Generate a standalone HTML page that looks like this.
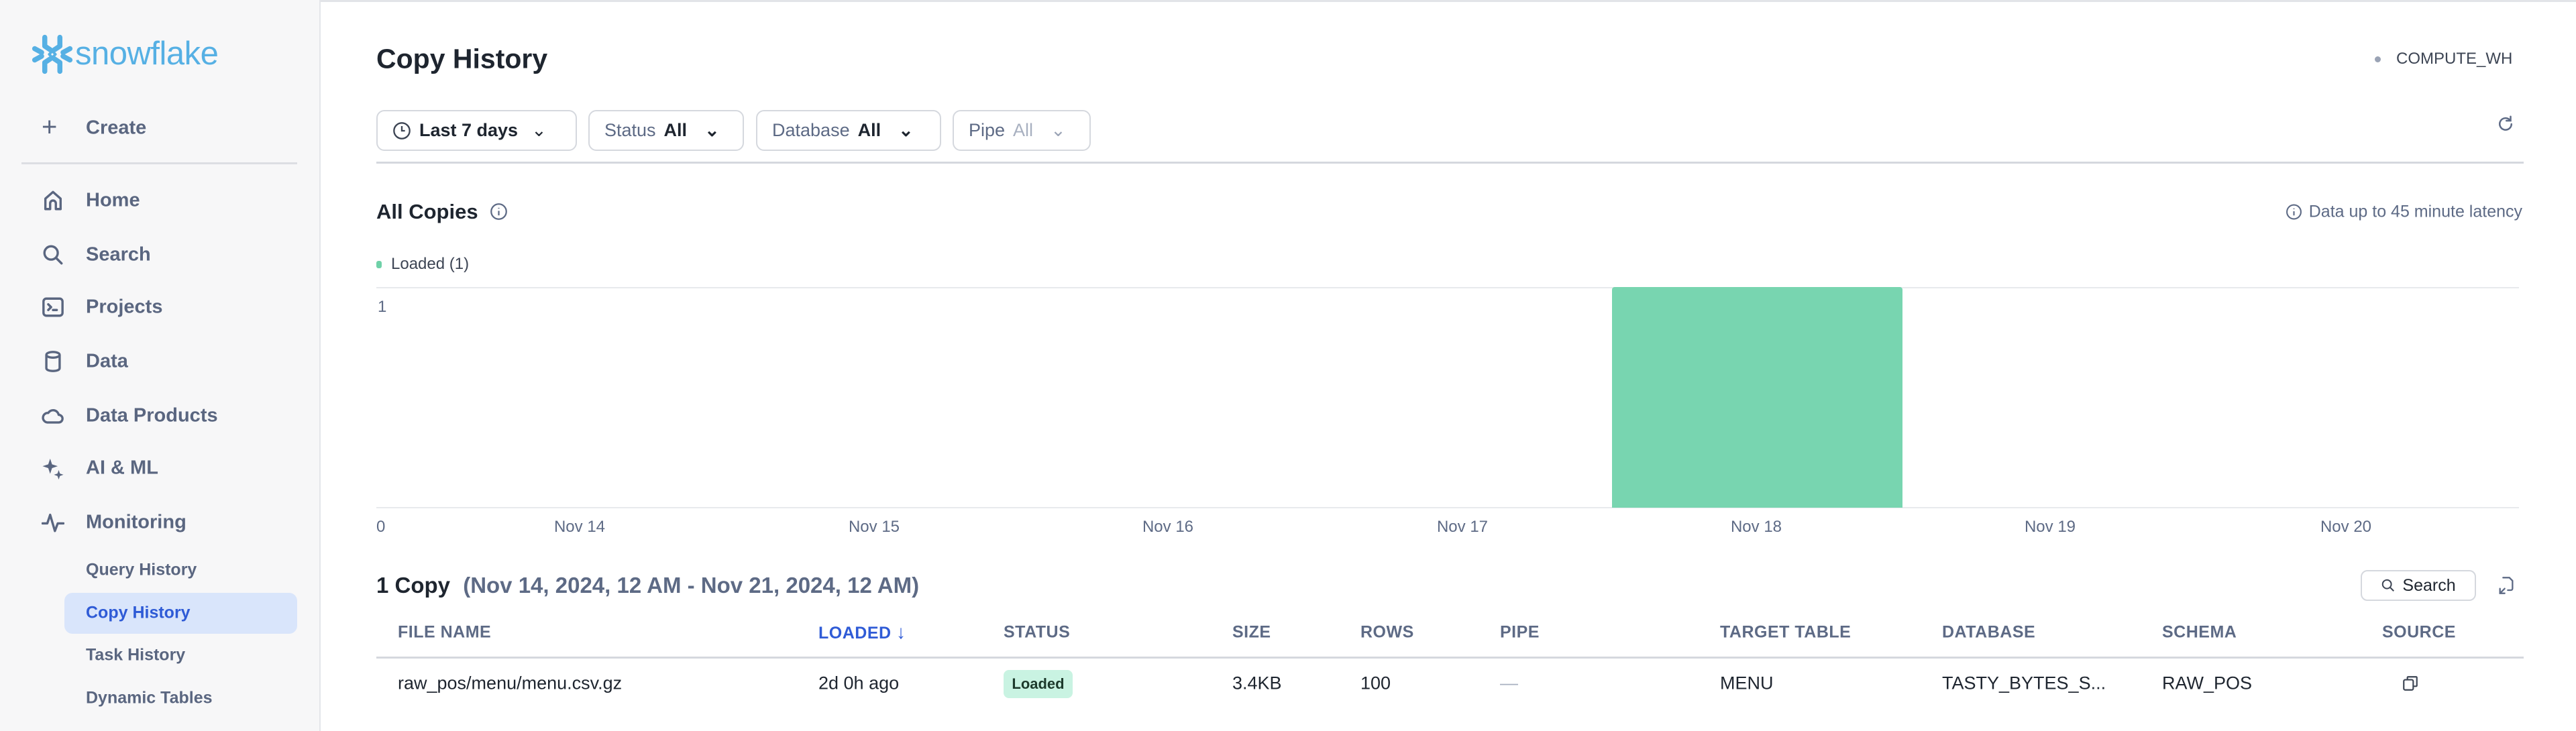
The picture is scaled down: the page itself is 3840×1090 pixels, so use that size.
<!DOCTYPE html>
<html><head><meta charset="utf-8"><style>
*{margin:0;padding:0;box-sizing:border-box}
body{width:3840px;height:1090px;position:relative;background:#fff;font-family:"Liberation Sans",Arial,sans-serif;color:#1e252f;overflow:hidden}
.a{position:absolute;white-space:nowrap}
.sb{position:absolute;left:0;top:0;width:478px;height:1090px;background:#f7f7f8;border-right:2px solid #e4e6ea}
.nav{position:absolute;left:128px;font-size:29px;font-weight:bold;color:#5a6680;transform:translateY(-50%)}
.sub{position:absolute;left:128px;font-size:25px;font-weight:bold;color:#5a6680;transform:translateY(-50%)}
.ic{position:absolute;left:62px;width:34px;height:34px;transform:translateY(-50%)}
.btn{position:absolute;top:164px;height:61px;border:2px solid #d5d8de;border-radius:12px;background:#fff;font-size:27px;display:flex;align-items:center;padding:0 22px;gap:12px}
.g{color:#5d6a85}
.hd{position:absolute;top:943px;font-size:25px;font-weight:bold;color:#5d6a85;transform:translateY(-50%);letter-spacing:0.5px}
.cell{position:absolute;top:1019px;font-size:27px;color:#1e252f;transform:translateY(-50%)}
.xl{position:absolute;top:786px;font-size:24px;color:#5d6a85;transform:translate(-50%,-50%)}
</style></head><body>
<div class="a" style="left:0;top:0;width:3840px;height:3px;background:#e2e4e8"></div>
<div class="sb">
  <svg class="a" style="left:47px;top:48px" width="62" height="66" viewBox="0 0 66 66" fill="none" stroke="#56b0e4" stroke-width="8" stroke-linecap="round" stroke-linejoin="round">
    <path d="M21 6 L21 20 L30 26 M45 6 L45 20 L36 26 M21 60 L21 46 L30 40 M45 60 L45 46 L36 40 M5 24 L16 30 M5 42 L16 36 M61 24 L50 30 M61 42 L50 36"/>
    <path d="M33 28 L38 33 L33 38 L28 33 Z" stroke-width="4"/>
  </svg>
  <div class="a" style="left:112px;top:52px;font-size:49px;color:#56b0e4;letter-spacing:-0.5px">snowflake</div>
  <div class="a" style="left:62px;top:191px;font-size:40px;color:#5a6680;transform:translateY(-52%)">+</div>
  <div class="nav" style="top:191px">Create</div>
  <div class="a" style="left:32px;top:242px;width:411px;height:3px;background:#dcdee3"></div>

  <svg class="ic" style="top:299px" viewBox="0 0 24 24" fill="none" stroke="#5a6680" stroke-width="2.4" stroke-linejoin="round"><path d="M4 21V10l8-7 8 7v11h-5v-6a3 3 0 0 0-6 0v6z"/></svg>
  <div class="nav" style="top:299px">Home</div>
  <svg class="ic" style="top:380px" viewBox="0 0 24 24" fill="none" stroke="#5a6680" stroke-width="2.4" stroke-linecap="round"><circle cx="10" cy="10" r="7"/><path d="M15 15l6 6"/></svg>
  <div class="nav" style="top:380px">Search</div>
  <svg class="ic" style="top:458px" viewBox="0 0 24 24" fill="none" stroke="#5a6680" stroke-width="2.4" stroke-linecap="round" stroke-linejoin="round"><rect x="2" y="3" width="20" height="18" rx="3"/><path d="M7 9l3 3-3 3M12 15h4"/></svg>
  <div class="nav" style="top:458px">Projects</div>
  <svg class="ic" style="top:539px" viewBox="0 0 24 24" fill="none" stroke="#5a6680" stroke-width="2.4"><path d="M5 5v14c0 2 3 3 7 3s7-1 7-3V5"/><ellipse cx="12" cy="5" rx="7" ry="3"/></svg>
  <div class="nav" style="top:539px">Data</div>
  <svg class="ic" style="top:620px" viewBox="0 0 24 24" fill="none" stroke="#5a6680" stroke-width="2.4" stroke-linejoin="round"><path d="M6 19h12a4 4 0 0 0 0-8 6 6 0 0 0-11-2A5 5 0 0 0 6 19z"/></svg>
  <div class="nav" style="top:620px">Data Products</div>
  <svg class="ic" style="top:698px" viewBox="0 0 24 24" fill="#5a6680"><path d="M9 2l2 6 6 2-6 2-2 6-2-6-6-2 6-2z"/><path d="M18 14l1.3 3.7L23 19l-3.7 1.3L18 24l-1.3-3.7L13 19l3.7-1.3z"/></svg>
  <div class="nav" style="top:698px">AI &amp; ML</div>
  <svg class="ic" style="top:779px" viewBox="0 0 24 24" fill="none" stroke="#5a6680" stroke-width="2.4" stroke-linecap="round" stroke-linejoin="round"><path d="M1 13h5l3-9 5 17 3-8h6"/></svg>
  <div class="nav" style="top:779px">Monitoring</div>

  <div class="sub" style="top:850px">Query History</div>
  <div class="a" style="left:96px;top:884px;width:347px;height:61px;background:#d9e5fb;border-radius:12px"></div>
  <div class="sub" style="top:914px;color:#2f5bd6">Copy History</div>
  <div class="sub" style="top:977px">Task History</div>
  <div class="sub" style="top:1041px">Dynamic Tables</div>
</div>

<div class="a" style="left:561px;top:88px;font-size:41px;font-weight:bold;transform:translateY(-50%)">Copy History</div>
<div class="a" style="left:3540px;top:84px;width:9px;height:9px;border-radius:50%;background:#9aa3b5"></div>
<div class="a" style="left:3572px;top:88px;font-size:24px;color:#3d4554;transform:translateY(-50%)">COMPUTE_WH</div>

<div class="btn" style="left:561px;width:299px"><svg width="28" height="28" viewBox="0 0 24 24" fill="none" stroke="#3d4554" stroke-width="2"><circle cx="12" cy="12" r="10"/><path d="M12 6v6h4"/></svg><b>Last 7 days</b><span style="margin-left:8px">⌄</span></div>
<div class="btn" style="left:877px;width:232px"><span class="g">Status</span><b>All</b><span style="margin-left:14px;font-weight:bold">⌄</span></div>
<div class="btn" style="left:1127px;width:276px"><span class="g">Database</span><b>All</b><span style="margin-left:14px;font-weight:bold">⌄</span></div>
<div class="btn" style="left:1420px;width:206px;color:#9aa3b5"><span class="g">Pipe</span><span style="color:#a8b0c0">All</span><span style="margin-left:14px">⌄</span></div>
<svg class="a" style="left:3720px;top:170px" width="30" height="30" viewBox="0 0 24 24" fill="none" stroke="#5d6a85" stroke-width="2" stroke-linecap="round"><path d="M19 12a7 7 0 1 1-2-5"/><path d="M18 3v5h-5"/></svg>
<div class="a" style="left:561px;top:241px;width:3201px;height:3px;background:#d5d8de"></div>

<div class="a" style="left:561px;top:316px;font-size:31px;font-weight:bold;transform:translateY(-50%)">All Copies</div>
<svg class="a" style="left:730px;top:302px" width="27" height="27" viewBox="0 0 24 24" fill="none" stroke="#5d6a85" stroke-width="2"><circle cx="12" cy="12" r="10"/><path d="M12 11v6M12 7v1"/></svg>
<div class="a" style="right:80px;top:316px;font-size:25px;color:#5d6a85;transform:translateY(-50%);display:flex;align-items:center;gap:10px"><svg width="25" height="25" viewBox="0 0 24 24" fill="none" stroke="#5d6a85" stroke-width="2"><circle cx="12" cy="12" r="10"/><path d="M12 11v6M12 7v1"/></svg>Data up to 45 minute latency</div>

<div class="a" style="left:561px;top:389px;width:8px;height:11px;border-radius:3px;background:#6fd1a8"></div>
<div class="a" style="left:583px;top:394px;font-size:24px;color:#3d4554;transform:translateY(-50%)">Loaded (1)</div>

<div class="a" style="left:561px;top:428px;width:3194px;height:2px;background:#e8eaed"></div>
<div class="a" style="left:561px;top:756px;width:3194px;height:2px;background:#e8eaed"></div>
<div class="a" style="left:2403px;top:428px;width:433px;height:329px;background:#78d5b0;border-radius:4px 4px 0 0"></div>
<div class="a" style="left:563px;top:458px;font-size:24px;color:#5d6a85;transform:translateY(-50%)">1</div>
<div class="a" style="left:561px;top:786px;font-size:24px;color:#5d6a85;transform:translateY(-50%)">0</div>
<div class="xl" style="left:864px">Nov 14</div>
<div class="xl" style="left:1303px">Nov 15</div>
<div class="xl" style="left:1741px">Nov 16</div>
<div class="xl" style="left:2180px">Nov 17</div>
<div class="xl" style="left:2618px">Nov 18</div>
<div class="xl" style="left:3056px">Nov 19</div>
<div class="xl" style="left:3497px">Nov 20</div>

<div class="a" style="left:561px;top:873px;font-size:33px;font-weight:bold;transform:translateY(-50%)">1 Copy <span style="color:#5d6a85;margin-left:10px">(Nov 14, 2024, 12 AM - Nov 21, 2024, 12 AM)</span></div>
<div class="a" style="left:3519px;top:850px;width:172px;height:46px;border:2px solid #d5d8de;border-radius:10px;display:flex;align-items:center;justify-content:center;gap:10px;font-size:25px"><svg width="22" height="22" viewBox="0 0 24 24" fill="none" stroke="#3d4554" stroke-width="2.2"><circle cx="10" cy="10" r="7"/><path d="M15 15l6 6"/></svg>Search</div>
<svg class="a" style="left:3722px;top:858px" width="28" height="30" viewBox="0 0 24 24" fill="none" stroke="#5d6a85" stroke-width="2" stroke-linecap="round"><path d="M8 2h8l4 4v10a2 2 0 0 1-2 2h-4"/><path d="M4 22l6-6M4 16v6h6" /></svg>

<div class="hd" style="left:593px">FILE NAME</div>
<div class="hd" style="left:1220px;color:#2f5bd6">LOADED <span style="font-size:28px">↓</span></div>
<div class="hd" style="left:1496px">STATUS</div>
<div class="hd" style="left:1837px">SIZE</div>
<div class="hd" style="left:2028px">ROWS</div>
<div class="hd" style="left:2236px">PIPE</div>
<div class="hd" style="left:2564px">TARGET TABLE</div>
<div class="hd" style="left:2895px">DATABASE</div>
<div class="hd" style="left:3223px">SCHEMA</div>
<div class="hd" style="left:3551px">SOURCE</div>
<div class="a" style="left:561px;top:979px;width:3201px;height:3px;background:#d5d8de"></div>

<div class="cell" style="left:593px">raw_pos/menu/menu.csv.gz</div>
<div class="cell" style="left:1220px">2d 0h ago</div>
<div class="a" style="left:1496px;top:999px;width:103px;height:42px;background:#c9f3e2;border-radius:8px;font-size:22px;font-weight:bold;color:#1d3a2c;display:flex;align-items:center;justify-content:center">Loaded</div>
<div class="cell" style="left:1837px">3.4KB</div>
<div class="cell" style="left:2028px">100</div>
<div class="cell" style="left:2236px;color:#a8b0c0">—</div>
<div class="cell" style="left:2564px">MENU</div>
<div class="cell" style="left:2895px">TASTY_BYTES_S...</div>
<div class="cell" style="left:3223px">RAW_POS</div>
<svg class="a" style="left:3580px;top:1005px" width="26" height="28" viewBox="0 0 24 24" fill="none" stroke="#3d4554" stroke-width="2"><rect x="3" y="7" width="13" height="14" rx="2"/><path d="M8 7V4a1 1 0 0 1 1-1h11a1 1 0 0 1 1 1v11a1 1 0 0 1-1 1h-4"/></svg>
</body></html>
